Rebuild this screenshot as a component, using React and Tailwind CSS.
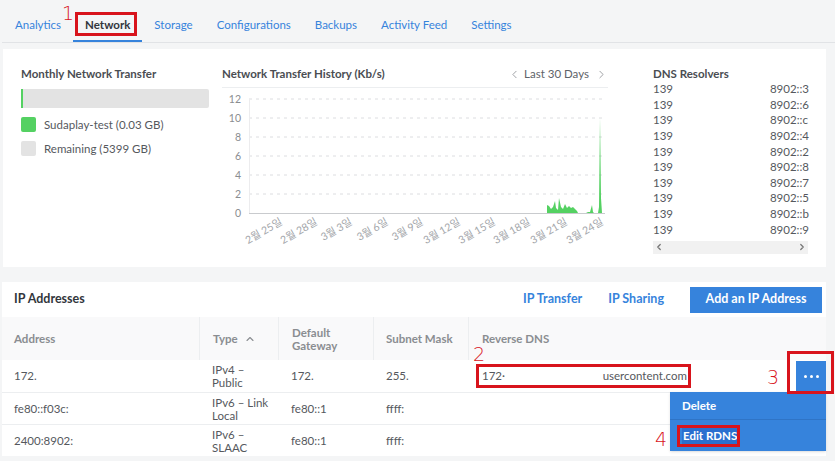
import { ChevronLeft, ChevronRight, ChevronUp } from 'lucide-react'

const tabs = ['Analytics', 'Network', 'Storage', 'Configurations', 'Backups', 'Activity Feed', 'Settings']

const dnsRows = ['3', '6', 'c', '4', '2', '8', '7', '5', 'b', '9']

const yTicks = [12, 10, 8, 6, 4, 2, 0]
const xLabels = [
  ['2월 25일', 61], ['2월 28일', 96], ['3월 3일', 131], ['3월 6일', 167], ['3월 9일', 202],
  ['3월 12일', 239], ['3월 15일', 274], ['3월 18일', 309], ['3월 21일', 346], ['3월 24일', 382],
]

const ipRows = [
  { addr: '172.', type: ['IPv4 –', 'Public'], gw: '172.', mask: '255.', rdns: true },
  { addr: 'fe80::f03c:', type: ['IPv6 – Link', 'Local'], gw: 'fe80::1', mask: 'ffff:' },
  { addr: '2400:8902:', type: ['IPv6 –', 'SLAAC'], gw: 'fe80::1', mask: 'ffff:' },
]

function TransferChart() {
  const y = (v) => 125 - v * 9.5
  return (
    <svg width="389" height="160" viewBox="0 0 389 160" className="block">
      {yTicks.map((t) => (
        <g key={t}>
          <text x="19" y={y(t) + 3.5} textAnchor="end" fontSize="10.5" fill="#8a8d91">{t}</text>
          {t > 0 && <line x1="27" x2="382" y1={y(t)} y2={y(t)} stroke="#dcdde0" strokeDasharray="3 4" />}
        </g>
      ))}
      <line x1="27.5" x2="27.5" y1="11" y2="125" stroke="#ececee" />
      <path
        d="M325,125 L325,117 L327,118 L329,121 L331,119 L333,113 L334,120 L336,122 L337,110 L339,119 L341,121 L343,116 L345,120 L347,118 L349,120 L351,119 L353,121 L355,123 L356,125 Z M364,125 L366,124 L368,124 L370,117 L371,124 L372,125 Z M376,125 L377,119 L378,30 L379,110 L380,125 Z"
        fill="#54d162"
      />
      <line x1="27" x2="383" y1="125.5" y2="125.5" stroke="#c9cbce" />
      {xLabels.map(([l, x]) => (
        <text key={l} x={x} y="136" textAnchor="end" fontSize="10.5" fill="#a3a6aa" transform={`rotate(-30 ${x} 136)`}>{l}</text>
      ))}
    </svg>
  )
}

function RedBox({ className }) {
  return <div className={`absolute border-[3px] border-[#d8141c] ${className}`} />
}

function RedNum({ n, className }) {
  return (
    <span className={`absolute text-[19px] leading-none text-[#d8141c] ${className}`} style={{ fontFamily: '"DejaVu Sans", sans-serif', fontWeight: 300 }}>
      {n}
    </span>
  )
}

export default function App() {
  return (
    <div className="relative w-[835px] h-[461px] overflow-hidden bg-[#f4f5f6] text-[#32363c]" style={{ fontFamily: 'Lato, "Noto Sans CJK KR", sans-serif' }}>
      {/* tabs */}
      <div className="ml-[2px] flex h-[43px] items-end border-b border-[#e1e3e6] pl-[1px]">
        {tabs.map((t) => (
          <div
            key={t}
            className={`px-[12px] pb-[7px] text-[11.5px] border-b-[2px] ${
              t === 'Network' ? 'border-[#3683dc] font-bold text-[#32363c]' : 'border-transparent text-[#3683dc]'
            }`}
          >
            {t}
          </div>
        ))}
      </div>

      {/* top card */}
      <div className="mt-[6px] ml-[3px] flex h-[218px] w-[823px] bg-white pl-[18px] pt-[17px]">
        <div className="w-[188px]">
          <div className="h-[16px] text-[11.5px] font-bold leading-[16px] text-[#4a4d52]">Monthly Network Transfer</div>
          <div className="mt-[7px] h-[19px] w-[188px] rounded-[2px] bg-[#e3e3e3]">
            <div className="h-full w-[2px] bg-[#54d162]" />
          </div>
          <div className="mt-[8px] flex items-center gap-[8px] text-[11.5px] text-[#55585d]">
            <div className="h-[15px] w-[15px] rounded-[2px] bg-[#54d162]" />
            Sudaplay-test (0.03 GB)
          </div>
          <div className="mt-[7px] flex items-center gap-[8px] text-[11.5px] text-[#55585d]">
            <div className="h-[15px] w-[15px] rounded-[2px] bg-[#e3e3e3]" />
            Remaining (5399 GB)
          </div>
        </div>

        <div className="ml-[13px] w-[389px]">
          <div className="flex h-[22px] w-[386px] items-start justify-between border-b border-[#eceef0]">
            <div className="text-[11.5px] font-bold leading-[16px] text-[#4a4d52]">Network Transfer History (Kb/s)</div>
            <div className="flex items-center gap-[3px] text-[11.5px] leading-[16px] text-[#606368]">
              <ChevronLeft size={13} strokeWidth={1.5} className="text-[#8a8d91]" />
              <span>Last 30 Days</span>
              <ChevronRight size={13} strokeWidth={1.5} className="ml-[3px] text-[#8a8d91]" />
            </div>
          </div>
          <TransferChart />
        </div>

        <div className="ml-[42px] w-[156px]">
          <div className="h-[16px] text-[11.5px] font-bold leading-[16px] text-[#4a4d52]">DNS Resolvers</div>
          <div className="mt-[-1px]">
            {dnsRows.map((r) => (
              <div key={r} className="flex h-[15.6px] items-center text-[11.5px] text-[#55585d]">
                <span className="w-[117px]">139</span>
                <span>8902::{r}</span>
              </div>
            ))}
          </div>
          <div className="mt-[4px] flex h-[13px] w-[155px] items-center justify-between bg-[#f1f1f1] px-[1px] text-[#777]">
            <ChevronLeft size={10} strokeWidth={3} />
            <ChevronRight size={10} strokeWidth={3} />
          </div>
        </div>
      </div>

      {/* IP card */}
      <div className="mt-[15px] ml-[2px] w-[824px] bg-white">
        <div className="flex h-[35px] items-center pl-[12px] pr-[4px]">
          <div className="flex-1 text-[12.5px] font-bold text-[#32363c]">IP Addresses</div>
          <div className="text-[12.5px] font-bold text-[#3683dc]">IP Transfer</div>
          <div className="ml-[26px] text-[12.5px] font-bold text-[#3683dc]">IP Sharing</div>
          <div className="ml-[26px] flex h-[26px] w-[132px] items-center justify-center bg-[#3683dc] text-[12.5px] font-bold text-white">Add an IP Address</div>
        </div>
        <div className="grid grid-cols-[198px_79px_95px_95px_1fr] bg-[#f9f9fa] text-[11.5px] font-bold text-[#8a8d91]">
          <div className="flex h-[43px] items-center border-r border-[#eceef0] pl-[12px]">Address</div>
          <div className="flex items-center gap-[6px] border-r border-[#eceef0] pl-[13px]">Type <ChevronUp size={12} strokeWidth={2.2} /></div>
          <div className="flex items-center border-r border-[#eceef0] pl-[13px] leading-[13px]">Default<br />Gateway</div>
          <div className="flex items-center border-r border-[#eceef0] pl-[12px]">Subnet Mask</div>
          <div className="flex items-center pl-[13px]">Reverse DNS</div>
        </div>
        {ipRows.map((r, i) => (
          <div key={i} className={`grid h-[32px] grid-cols-[198px_79px_95px_95px_1fr] text-[11.5px] text-[#55585d] ${i > 0 ? 'border-t border-[#eceef0]' : ''}`}>
            <div className="flex items-center pl-[12px]">{r.addr}</div>
            <div className="flex flex-col justify-center pl-[12px] leading-[13px]">
              <span>{r.type[0]}</span>
              <span>{r.type[1]}</span>
            </div>
            <div className="flex items-center pl-[12px]">{r.gw}</div>
            <div className="flex items-center pl-[12px]">{r.mask}</div>
            <div className="flex items-center pl-[13px]">
              {r.rdns && (
                <>
                  <div className="flex w-[205px] justify-between">
                    <span>172·</span>
                    <span>usercontent.com</span>
                  </div>
                  <div className="ml-auto flex h-[31px] w-[30px] items-center justify-center gap-[3px] bg-[#3683dc]">
                    <span className="h-[3px] w-[3px] rounded-full bg-white" />
                    <span className="h-[3px] w-[3px] rounded-full bg-white" />
                    <span className="h-[3px] w-[3px] rounded-full bg-white" />
                  </div>
                </>
              )}
            </div>
          </div>
        ))}
      </div>

      {/* dropdown menu */}
      <div className="absolute left-[670px] top-[392px] w-[156px] bg-[#3683dc] text-[11.5px] font-bold text-white shadow">
        <div className="flex h-[28px] items-center border-b border-[#2f74c6] pl-[12px]">Delete</div>
        <div className="flex h-[31px] items-center pl-[12px]">
          <span className="bg-[#2a6fcf] px-[1px]">Edit RDNS</span>
        </div>
      </div>

      {/* annotations */}
      <RedBox className="left-[75px] top-[12px] h-[24px] w-[62px]" />
      <RedNum n="1" className="left-[62px] top-[4px]" />
      <RedBox className="left-[476px] top-[364px] h-[24px] w-[215px]" />
      <RedNum n="2" className="left-[473px] top-[345px]" />
      <RedBox className="left-[787px] top-[351px] h-[43px] w-[47px]" />
      <RedNum n="3" className="left-[767px] top-[368px]" />
      <RedBox className="left-[677px] top-[425px] h-[22px] w-[63px]" />
      <RedNum n="4" className="left-[655px] top-[430px]" />
    </div>
  )
}
